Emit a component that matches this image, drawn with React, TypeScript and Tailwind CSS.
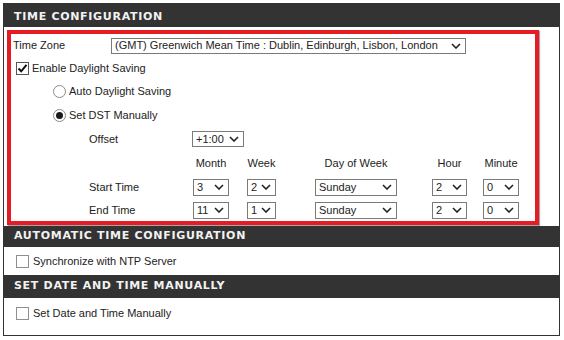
import React from "react"

const Chevron = () => (
  <svg width="10" height="6" viewBox="0 0 10 6" className="shrink-0">
    <polyline points="1,1 5,5 9,1" fill="none" stroke="#222" strokeWidth="1.6" />
  </svg>
)

const Select = ({ value, w, h = "h-[17px]" }: { value: string; w: string; h?: string }) => (
  <div className={`${w} ${h} flex items-center justify-between border border-[#7a7a7a] bg-white pl-[3px] pr-[4px] text-[#222]`}>
    <span className="whitespace-nowrap leading-none">{value}</span>
    <Chevron />
  </div>
)

const Checkbox = ({ checked = false }: { checked?: boolean }) => (
  <div
    className={`flex h-[13px] w-[13px] shrink-0 items-center justify-center border bg-white ${
      checked ? "border-[#555]" : "border-[#8f8f8f]"
    }`}
  >
    {checked && (
      <svg width="11" height="11" viewBox="0 0 11 11">
        <polyline points="1.5,5.5 4.2,8.3 9.5,1.8" fill="none" stroke="#111" strokeWidth="2" />
      </svg>
    )}
  </div>
)

const Radio = ({ checked = false }: { checked?: boolean }) => (
  <div className="flex h-[13px] w-[13px] shrink-0 items-center justify-center rounded-full border border-[#8a8a8a] bg-white">
    {checked && <div className="h-[7px] w-[7px] rounded-full bg-[#1a1a1a]" />}
  </div>
)

const Header = ({ title, h, extra = "" }: { title: string; h: string; extra?: string }) => (
  <div
    className={`${h} ${extra} flex items-center bg-[#333333] pl-[10px] font-['DejaVu_Sans',Verdana,sans-serif] text-[11px] font-bold tracking-[0.7px] text-[#f2f2f2]`}
  >
    {title}
  </div>
)

const cols = [
  { label: "Month", w: "w-[36px]", start: "3", end: "11" },
  { label: "Week", w: "w-[29px]", start: "2", end: "1" },
  { label: "Day of Week", w: "w-[82px]", start: "Sunday", end: "Sunday" },
  { label: "Hour", w: "w-[35px]", start: "2", end: "2" },
  { label: "Minute", w: "w-[36px]", start: "0", end: "0" },
]

const App = () => {
  return (
    <div className="h-[340px] w-[564px] bg-white pl-[3px] pt-[3px] font-['Liberation_Sans',Arial,sans-serif] text-[11px] text-[#222]">
      <div className="flex h-[333px] w-[557px] flex-col border border-[#333]">
        <Header title="TIME CONFIGURATION" h="h-[23px]" extra="pt-[3px]" />

        {/* red highlight box */}
        <div className="mb-[1px] ml-[3px] mt-[3px] w-[532px] border-[4px] border-[#e61c24] shadow-[1px_1px_1px_rgba(0,0,0,0.35)]">
          <div className="flex h-[23px] items-center pl-[2px]">
            <span className="w-[98px]">Time Zone</span>
            <Select
              value="(GMT) Greenwich Mean Time : Dublin, Edinburgh, Lisbon, London"
              w="w-[355px]"
              h="h-[16px]"
            />
          </div>
          <div className="flex h-[23px] items-center gap-[3px] pl-[5px]">
            <Checkbox checked />
            <span>Enable Daylight Saving</span>
          </div>
          <div className="flex h-[23px] items-center gap-[3px] pl-[42px]">
            <Radio />
            <span>Auto Daylight Saving</span>
          </div>
          <div className="flex h-[24px] items-center gap-[3px] pl-[42px]">
            <Radio checked />
            <span>Set DST Manually</span>
          </div>
          <div className="flex h-[24px] items-center pl-[78px]">
            <span className="w-[103px]">Offset</span>
            <Select value="+1:00" w="w-[52px]" h="h-[16px]" />
          </div>

          <div className="grid grid-cols-[104px_54px_68px_117px_51px_36px] pl-[78px]">
            <div className="h-[24px]" />
            {cols.map((c) => (
              <div key={c.label} className="flex h-[24px] items-center">
                <div className={`${c.w} whitespace-nowrap text-center`}>{c.label}</div>
              </div>
            ))}

            <div className="flex h-[24px] items-center">Start Time</div>
            {cols.map((c) => (
              <div key={c.label + "s"} className="flex h-[24px] items-center">
                <Select value={c.start} w={c.w} />
              </div>
            ))}

            <div className="flex h-[22px] items-center">End Time</div>
            {cols.map((c) => (
              <div key={c.label + "e"} className="flex h-[22px] items-center">
                <Select value={c.end} w={c.w} />
              </div>
            ))}
          </div>
        </div>

        <Header title="AUTOMATIC TIME CONFIGURATION" h="h-[21px]" />
        <div className="flex h-[28px] items-center gap-[4px] pl-[12px]">
          <Checkbox />
          <span>Synchronize with NTP Server</span>
        </div>

        <Header title="SET DATE AND TIME MANUALLY" h="h-[23px]" />
        <div className="flex items-center gap-[4px] pl-[12px] pt-[7px]">
          <Checkbox />
          <span>Set Date and Time Manually</span>
        </div>
      </div>
    </div>
  )
}

export default App
